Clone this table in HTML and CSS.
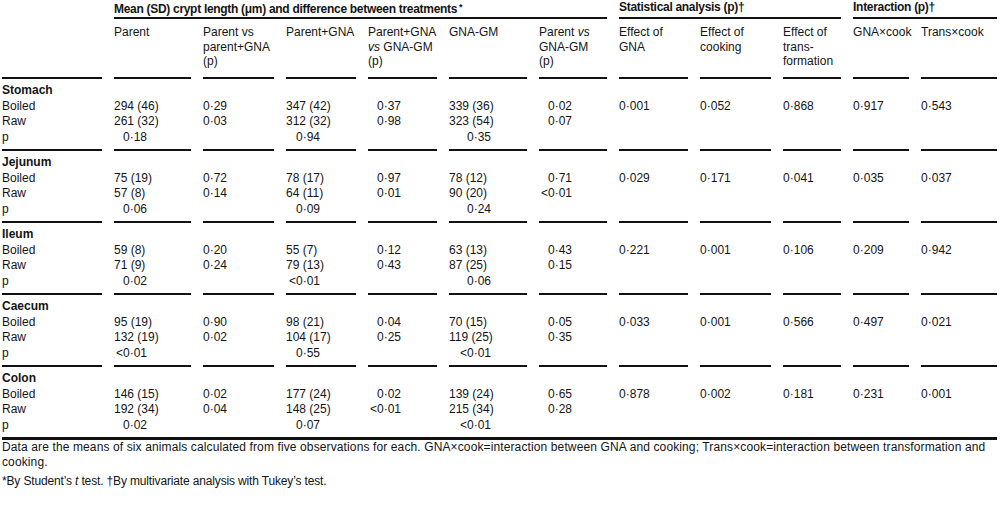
FILE: index.html
```html
<!DOCTYPE html>
<html lang="en">
<head>
<meta charset="utf-8">
<title>Crypt length</title>
<link rel="stylesheet" href="styles.css">
</head>
<body>
<div class="page">
<table class="data">
<colgroup>
<col class="w1"><col class="w2"><col class="w3"><col class="w4"><col class="w5"><col class="w6">
<col class="w7"><col class="w8"><col class="w9"><col class="w10"><col class="w11"><col class="w12">
</colgroup>
<thead>
<tr class="span-row">
<th class="nob"></th>
<th colspan="6">Mean (SD) crypt length (μm) and difference between treatments<span class="fn">*</span></th>
<th colspan="3">Statistical analysis (p)†</th>
<th colspan="2">Interaction (p)†</th>
</tr>
<tr class="col-row">
<th></th>
<th>Parent</th>
<th>Parent vs<br>parent+GNA<br>(p)</th>
<th>Parent+GNA</th>
<th>Parent+GNA<br><i>vs</i> GNA-GM<br>(p)</th>
<th>GNA-GM</th>
<th>Parent <i>vs</i><br>GNA-GM<br>(p)</th>
<th>Effect of<br>GNA</th>
<th>Effect of<br>cooking</th>
<th>Effect of<br>trans-<br>formation</th>
<th>GNA×cook</th>
<th>Trans×cook</th>
</tr>
</thead>
<tbody>
<tr class="first"><td class="organ">Stomach</td><td></td><td></td><td></td><td></td><td></td><td></td><td></td><td></td><td></td><td></td><td></td></tr>
<tr><td>Boiled</td><td>294 (46)</td><td>0·29</td><td>347 (42)</td><td class="i9">0·37</td><td>339 (36)</td><td class="i9">0·02</td><td>0·001</td><td>0·052</td><td>0·868</td><td>0·917</td><td>0·543</td></tr>
<tr><td>Raw</td><td>261 (32)</td><td>0·03</td><td>312 (32)</td><td class="i9">0·98</td><td>323 (54)</td><td class="i9">0·07</td><td></td><td></td><td></td><td></td><td></td></tr>
<tr class="last"><td>p</td><td class="i9">0·18</td><td></td><td class="i10">0·94</td><td></td><td class="i18">0·35</td><td></td><td></td><td></td><td></td><td></td><td></td></tr>
</tbody>
<tbody>
<tr class="first"><td class="organ">Jejunum</td><td></td><td></td><td></td><td></td><td></td><td></td><td></td><td></td><td></td><td></td><td></td></tr>
<tr><td>Boiled</td><td>75 (19)</td><td>0·72</td><td>78 (17)</td><td class="i9">0·97</td><td>78 (12)</td><td class="i9">0·71</td><td>0·029</td><td>0·171</td><td>0·041</td><td>0·035</td><td>0·037</td></tr>
<tr><td>Raw</td><td>57 (8)</td><td>0·14</td><td>64 (11)</td><td class="i9">0·01</td><td>90 (20)</td><td class="i9"><span class="lt">&lt;</span>0·01</td><td></td><td></td><td></td><td></td><td></td></tr>
<tr class="last"><td>p</td><td class="i9">0·06</td><td></td><td class="i10">0·09</td><td></td><td class="i18">0·24</td><td></td><td></td><td></td><td></td><td></td><td></td></tr>
</tbody>
<tbody>
<tr class="first"><td class="organ">Ileum</td><td></td><td></td><td></td><td></td><td></td><td></td><td></td><td></td><td></td><td></td><td></td></tr>
<tr><td>Boiled</td><td>59 (8)</td><td>0·20</td><td>55 (7)</td><td class="i9">0·12</td><td>63 (13)</td><td class="i9">0·43</td><td>0·221</td><td>0·001</td><td>0·106</td><td>0·209</td><td>0·942</td></tr>
<tr><td>Raw</td><td>71 (9)</td><td>0·24</td><td>79 (13)</td><td class="i9">0·43</td><td>87 (25)</td><td class="i9">0·15</td><td></td><td></td><td></td><td></td><td></td></tr>
<tr class="last"><td>p</td><td class="i9">0·02</td><td></td><td class="i10"><span class="lt">&lt;</span>0·01</td><td></td><td class="i18">0·06</td><td></td><td></td><td></td><td></td><td></td><td></td></tr>
</tbody>
<tbody>
<tr class="first"><td class="organ">Caecum</td><td></td><td></td><td></td><td></td><td></td><td></td><td></td><td></td><td></td><td></td><td></td></tr>
<tr><td>Boiled</td><td>95 (19)</td><td>0·90</td><td>98 (21)</td><td class="i9">0·04</td><td>70 (15)</td><td class="i9">0·05</td><td>0·033</td><td>0·001</td><td>0·566</td><td>0·497</td><td>0·021</td></tr>
<tr><td>Raw</td><td>132 (19)</td><td>0·02</td><td>104 (17)</td><td class="i9">0·25</td><td>119 (25)</td><td class="i9">0·35</td><td></td><td></td><td></td><td></td><td></td></tr>
<tr class="last"><td>p</td><td class="i9"><span class="lt">&lt;</span>0·01</td><td></td><td class="i10">0·55</td><td></td><td class="i18"><span class="lt">&lt;</span>0·01</td><td></td><td></td><td></td><td></td><td></td><td></td></tr>
</tbody>
<tbody class="final">
<tr class="first"><td class="organ">Colon</td><td></td><td></td><td></td><td></td><td></td><td></td><td></td><td></td><td></td><td></td><td></td></tr>
<tr><td>Boiled</td><td>146 (15)</td><td>0·02</td><td>177 (24)</td><td class="i9">0·02</td><td>139 (24)</td><td class="i9">0·65</td><td>0·878</td><td>0·002</td><td>0·181</td><td>0·231</td><td>0·001</td></tr>
<tr><td>Raw</td><td>192 (34)</td><td>0·04</td><td>148 (25)</td><td class="i9"><span class="lt">&lt;</span>0·01</td><td>215 (34)</td><td class="i9">0·28</td><td></td><td></td><td></td><td></td><td></td></tr>
<tr class="last"><td>p</td><td class="i9">0·02</td><td></td><td class="i10">0·07</td><td></td><td class="i18"><span class="lt">&lt;</span>0·01</td><td></td><td></td><td></td><td></td><td></td><td></td></tr>
</tbody>
</table>
<div class="final-rule"></div>
<div class="notes">
<p class="note">Data are the means of six animals calculated from five observations for each. GNA×cook=interaction between GNA and cooking; Trans×cook=interaction between transformation and<br>cooking.</p>
<p class="note foot">*By Student’s <i>t</i> test. †By multivariate analysis with Tukey’s test.</p>
</div>
</div>
</body>
</html>
```

FILE: styles.css
```css
html, body {
  margin: 0;
  padding: 0;
  background: #ffffff;
  overflow: hidden;
}

body {
  color: #141414;
  font-family: "Liberation Sans", Arial, sans-serif;
  font-size: 12px;
  line-height: 15.5px;
}

.page {
  padding: 0 0 0 2px;
  overflow: hidden;
  width: 998px;
}

table.data {
  border-collapse: separate;
  border-spacing: 12px 0;
  margin-left: -12px;
  table-layout: fixed;
  width: 1019px;
}

.w1 { width: 100px; }
.w2 { width: 77px; }
.w3 { width: 71px; }
.w4 { width: 70px; }
.w5 { width: 69px; }
.w6 { width: 78px; }
.w7 { width: 68px; }
.w8 { width: 69px; }
.w9 { width: 71px; }
.w10 { width: 58px; }
.w11 { width: 56px; }
.w12 { width: 76px; }

th, td {
  padding: 0;
  text-align: left;
  vertical-align: top;
  white-space: nowrap;
  font-weight: normal;
}

.span-row th {
  font-weight: bold;
  line-height: 15px;
  padding-bottom: 0;
  border-bottom: 2px solid #111;
  letter-spacing: -0.3px;
}

.span-row th.nob {
  border-bottom: none;
}

.fn {
  font-size: 9px;
  vertical-align: 3px;
  margin-left: 2px;
}

.col-row th {
  line-height: 14.5px;
  padding-top: 6px;
  height: 43.5px;
  padding-bottom: 8.5px;
  border-bottom: 2px solid #111;
}

tbody tr.first td {
  padding-top: 4px;
}

tbody tr.last td {
  padding-bottom: 4px;
  border-bottom: 2px solid #111;
}

tbody.final tr.last td {
  border-bottom: none;
}

.final-rule {
  height: 3px;
  background: #111;
  width: 995px;
}

td.organ {
  font-weight: bold;
}

.i9 { padding-left: 9px; }
.i10 { padding-left: 10px; }
.i18 { padding-left: 18px; }

.lt {
  display: inline-block;
  width: 7px;
  margin-left: -7px;
}

.notes {
  padding-top: 0;
}

.note {
  margin: 0;
  line-height: 15px;
  letter-spacing: 0.12px;
}

.note.foot {
  margin-top: 4px;
  letter-spacing: -0.15px;
}
```
